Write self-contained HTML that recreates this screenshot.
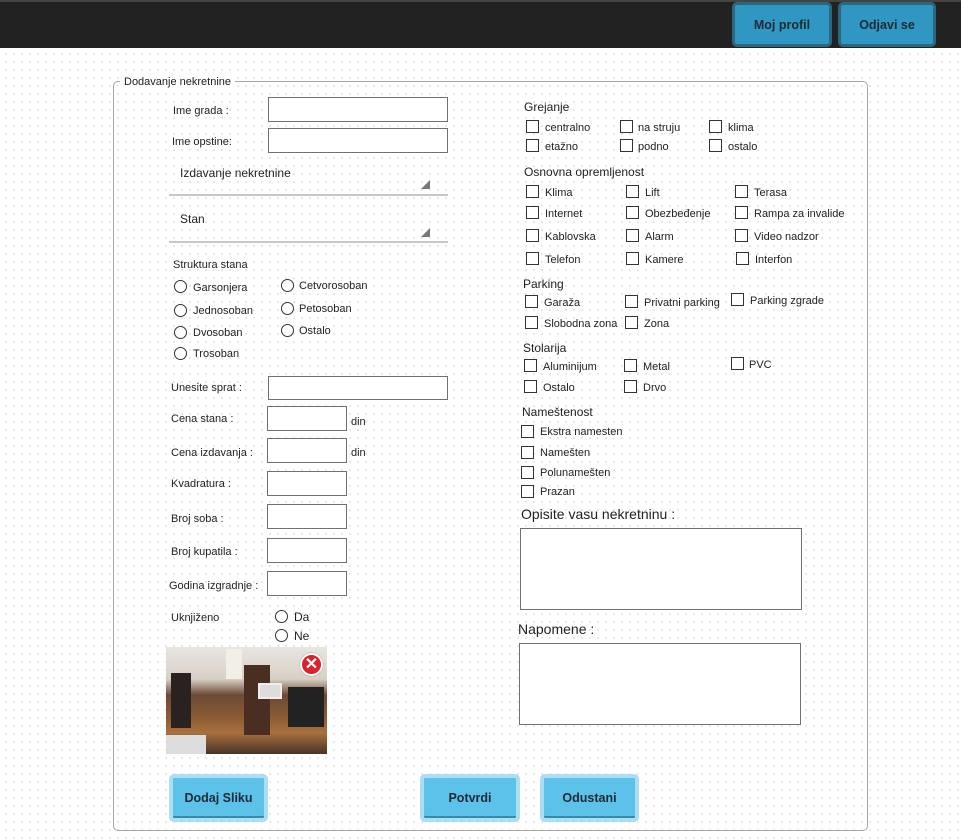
<!DOCTYPE html>
<html><head><meta charset="utf-8"><style>
*{margin:0;padding:0;box-sizing:border-box}
body{width:961px;height:840px;position:relative;overflow:hidden;font-family:"Liberation Sans",sans-serif;font-size:11px;color:#222;
background-color:#fff;background-image:radial-gradient(circle,#e0e0e0 0.8px,transparent 1px);background-size:8px 8px;background-position:2px 2px}
#hd{position:absolute;left:0;top:0;width:961px;height:48px;background:#222;border-top:2px solid #444}
.hb{position:absolute;top:2px;height:45px;background:#2f97c1;border:3px solid #2a6880;border-radius:5px;color:#1d2a33;font-size:12.5px;font-weight:bold;display:flex;align-items:center;justify-content:center}
.t{position:absolute;white-space:nowrap;line-height:14px;transform:translateY(1px)}
.in{position:absolute;background:#fff;border:1px solid #707070}
.cb{position:absolute;width:13px;height:13px;border:1px solid #333;background:#fff}
.rd{position:absolute;width:13px;height:13px;border:1px solid #333;border-radius:50%;background:#fff}
.ln{position:absolute;height:2px;background:#c8c8c8}
.tri{position:absolute;width:0;height:0;border-left:9px solid transparent;border-bottom:9px solid #777}
.bb{position:absolute;height:48px;background:#5cc2ea;border:4px solid #a9def3;border-radius:5px;font-size:12.5px;font-weight:bold;color:#1d2a33;display:flex;align-items:center;justify-content:center;box-shadow:inset 0 -2px 0 #3a8aaa}
.b12{font-size:12px}
</style></head><body>
<div id="hd"></div>
<div class="hb" style="left:732px;width:100px">Moj profil</div>
<div class="hb" style="left:838px;width:98px">Odjavi se</div>

<div style="position:absolute;left:113px;top:81px;width:755px;height:750px;border:1px solid #a8a8a0;border-radius:5px"></div>
<div class="t" style="left:120px;top:74px;padding:0 4px;background:#fff">Dodavanje nekretnine</div>

<div class="t" style="left:173px;top:103px">Ime grada :</div><div class="in" style="left:268px;top:97px;width:180px;height:25px"></div>
<div class="t" style="left:172px;top:134px">Ime opstine:</div><div class="in" style="left:268px;top:128px;width:180px;height:25px"></div>
<div class="t b12" style="left:180px;top:165px">Izdavanje nekretnine</div><div class="tri" style="left:421px;top:180px"></div><div class="ln" style="left:169px;top:194px;width:279px"></div>
<div class="t b12" style="left:180px;top:211px">Stan</div><div class="tri" style="left:421px;top:228px"></div><div class="ln" style="left:169px;top:241px;width:279px"></div>
<div class="t" style="left:173px;top:257px">Struktura stana</div>
<div class="rd" style="left:174px;top:280px"></div><div class="t" style="left:193px;top:280px">Garsonjera</div>
<div class="rd" style="left:174px;top:304px"></div><div class="t" style="left:193px;top:303px">Jednosoban</div>
<div class="rd" style="left:174px;top:326px"></div><div class="t" style="left:193px;top:325px">Dvosoban</div>
<div class="rd" style="left:174px;top:347px"></div><div class="t" style="left:193px;top:346px">Trosoban</div>
<div class="rd" style="left:281px;top:279px"></div><div class="t" style="left:299px;top:278px">Cetvorosoban</div>
<div class="rd" style="left:281px;top:302px"></div><div class="t" style="left:299px;top:301px">Petosoban</div>
<div class="rd" style="left:281px;top:324px"></div><div class="t" style="left:299px;top:323px">Ostalo</div>

<div class="t" style="left:171px;top:380px">Unesite sprat :</div><div class="in" style="left:268px;top:376px;width:180px;height:24px"></div>
<div class="t" style="left:171px;top:411px">Cena stana :</div><div class="in" style="left:267px;top:406px;width:80px;height:25px"></div><div class="t" style="left:351px;top:414px">din</div>
<div class="t" style="left:171px;top:445px">Cena izdavanja :</div><div class="in" style="left:267px;top:438px;width:80px;height:25px"></div><div class="t" style="left:351px;top:445px">din</div>
<div class="t" style="left:171px;top:476px">Kvadratura :</div><div class="in" style="left:267px;top:471px;width:80px;height:25px"></div>
<div class="t" style="left:171px;top:511px">Broj soba :</div><div class="in" style="left:267px;top:504px;width:80px;height:25px"></div>
<div class="t" style="left:171px;top:544px">Broj kupatila :</div><div class="in" style="left:267px;top:538px;width:80px;height:25px"></div>
<div class="t" style="left:169px;top:578px">Godina izgradnje :</div><div class="in" style="left:267px;top:571px;width:80px;height:25px"></div>
<div class="t" style="left:171px;top:610px">Uknjiženo</div>
<div class="rd" style="left:275px;top:610px"></div><div class="t b12" style="left:294px;top:609px">Da</div>
<div class="rd" style="left:275px;top:629px"></div><div class="t b12" style="left:294px;top:628px">Ne</div>

<div style="position:absolute;left:166px;top:647px;width:161px;height:107px;overflow:hidden;background:linear-gradient(180deg,#e8e6e2 0%,#d8d0c6 30%,#6b4a36 45%,#8a5a34 65%,#a8703e 80%,#4a3426 100%)">
<div style="position:absolute;left:78px;top:18px;width:26px;height:70px;background:#4a2e22"></div>
<div style="position:absolute;left:92px;top:36px;width:24px;height:16px;background:#ddd;border:2px solid #eee"></div>
<div style="position:absolute;left:5px;top:26px;width:20px;height:55px;background:#2a2220"></div>
<div style="position:absolute;left:122px;top:40px;width:36px;height:40px;background:#222"></div>
<div style="position:absolute;left:0;top:88px;width:40px;height:20px;background:#ddd"></div>
<div style="position:absolute;left:60px;top:2px;width:16px;height:30px;background:#f2efe6"></div>
</div>
<div style="position:absolute;left:300px;top:653px;width:23px;height:23px;border-radius:50%;background:#d8242c;border:2px solid #fff;box-shadow:0 0 1px #555;color:#fff;font-weight:bold;font-size:16px;line-height:19px;text-align:center">✕</div>

<div class="bb" style="left:169px;top:774px;width:99px">Dodaj Sliku</div>
<div class="bb" style="left:420px;top:774px;width:100px">Potvrdi</div>
<div class="bb" style="left:540px;top:774px;width:99px">Odustani</div>

<div class="t b12" style="left:524px;top:99px">Grejanje</div>
<div class="cb" style="left:526px;top:120px"></div><div class="t" style="left:545px;top:120px">centralno</div>
<div class="cb" style="left:620px;top:120px"></div><div class="t" style="left:638px;top:120px">na struju</div>
<div class="cb" style="left:709px;top:120px"></div><div class="t" style="left:728px;top:120px">klima</div>
<div class="cb" style="left:526px;top:139px"></div><div class="t" style="left:545px;top:139px">etažno</div>
<div class="cb" style="left:620px;top:139px"></div><div class="t" style="left:638px;top:139px">podno</div>
<div class="cb" style="left:709px;top:139px"></div><div class="t" style="left:728px;top:139px">ostalo</div>

<div class="t b12" style="left:524px;top:164px">Osnovna opremljenost</div>
<div class="cb" style="left:526px;top:185px"></div><div class="t" style="left:545px;top:185px">Klima</div>
<div class="cb" style="left:626px;top:185px"></div><div class="t" style="left:645px;top:185px">Lift</div>
<div class="cb" style="left:735px;top:185px"></div><div class="t" style="left:754px;top:185px">Terasa</div>
<div class="cb" style="left:526px;top:206px"></div><div class="t" style="left:545px;top:206px">Internet</div>
<div class="cb" style="left:626px;top:206px"></div><div class="t" style="left:645px;top:206px">Obezbeđenje</div>
<div class="cb" style="left:735px;top:206px"></div><div class="t" style="left:754px;top:206px">Rampa za invalide</div>
<div class="cb" style="left:526px;top:229px"></div><div class="t" style="left:545px;top:229px">Kablovska</div>
<div class="cb" style="left:626px;top:229px"></div><div class="t" style="left:645px;top:229px">Alarm</div>
<div class="cb" style="left:735px;top:229px"></div><div class="t" style="left:754px;top:229px">Video nadzor</div>
<div class="cb" style="left:526px;top:252px"></div><div class="t" style="left:545px;top:252px">Telefon</div>
<div class="cb" style="left:626px;top:252px"></div><div class="t" style="left:645px;top:252px">Kamere</div>
<div class="cb" style="left:736px;top:252px"></div><div class="t" style="left:755px;top:252px">Interfon</div>

<div class="t b12" style="left:523px;top:276px">Parking</div>
<div class="cb" style="left:525px;top:295px"></div><div class="t" style="left:544px;top:295px">Garaža</div>
<div class="cb" style="left:625px;top:295px"></div><div class="t" style="left:644px;top:295px">Privatni parking</div>
<div class="cb" style="left:731px;top:293px"></div><div class="t" style="left:750px;top:293px">Parking zgrade</div>
<div class="cb" style="left:525px;top:316px"></div><div class="t" style="left:544px;top:316px">Slobodna zona</div>
<div class="cb" style="left:625px;top:316px"></div><div class="t" style="left:644px;top:316px">Zona</div>

<div class="t b12" style="left:523px;top:340px">Stolarija</div>
<div class="cb" style="left:524px;top:359px"></div><div class="t" style="left:543px;top:359px">Aluminijum</div>
<div class="cb" style="left:624px;top:359px"></div><div class="t" style="left:643px;top:359px">Metal</div>
<div class="cb" style="left:731px;top:357px"></div><div class="t" style="left:749px;top:357px">PVC</div>
<div class="cb" style="left:524px;top:380px"></div><div class="t" style="left:543px;top:380px">Ostalo</div>
<div class="cb" style="left:624px;top:380px"></div><div class="t" style="left:643px;top:380px">Drvo</div>

<div class="t b12" style="left:522px;top:404px">Nameštenost</div>
<div class="cb" style="left:521px;top:425px"></div><div class="t" style="left:540px;top:424px">Ekstra namesten</div>
<div class="cb" style="left:521px;top:446px"></div><div class="t" style="left:540px;top:445px">Namešten</div>
<div class="cb" style="left:521px;top:466px"></div><div class="t" style="left:540px;top:465px">Polunamešten</div>
<div class="cb" style="left:521px;top:485px"></div><div class="t" style="left:540px;top:484px">Prazan</div>

<div class="t" style="left:521px;top:505px;font-size:14px;line-height:16px">Opisite vasu nekretninu :</div>
<div class="in" style="left:520px;top:528px;width:282px;height:82px"></div>
<div class="t" style="left:518px;top:620px;font-size:14px;line-height:16px">Napomene :</div>
<div class="in" style="left:519px;top:643px;width:282px;height:82px"></div>
</body></html>
